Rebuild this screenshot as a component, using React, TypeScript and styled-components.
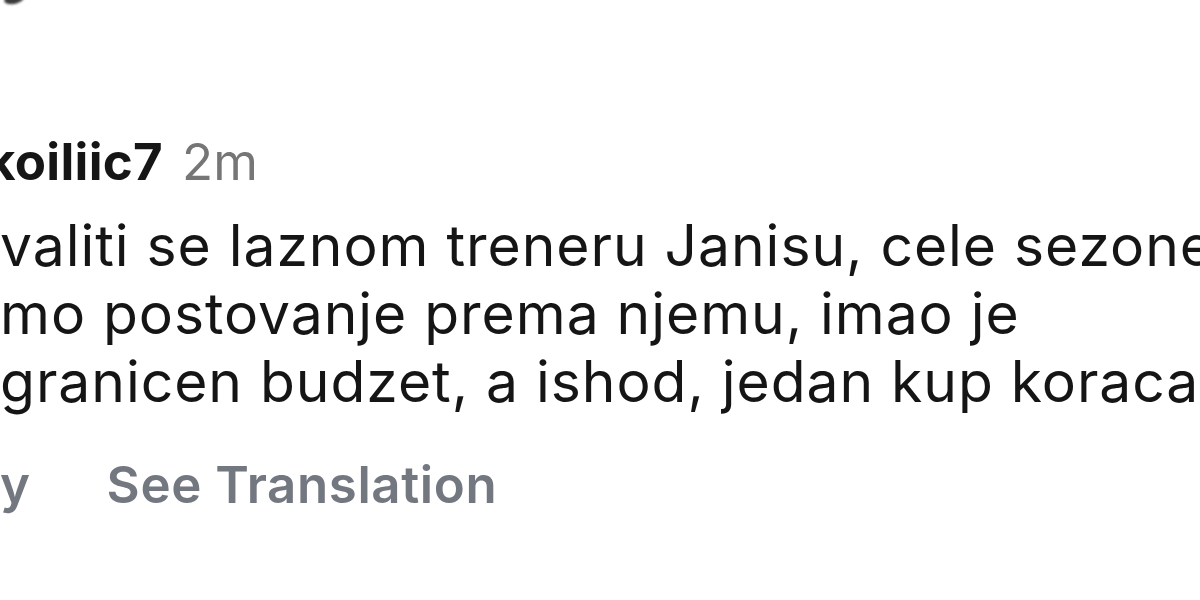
import React from "react";
import styled, { createGlobalStyle } from "styled-components";

const Global = createGlobalStyle`
  html, body {
    margin: 0;
    padding: 0;
    background: #ffffff;
    overflow: hidden;
  }
  body {
    font-family: "Inter", "Liberation Sans", sans-serif;
    -webkit-font-smoothing: antialiased;
  }
`;

const Page = styled.div`
  width: 1200px;
  height: 600px;
  overflow: hidden;
  background: #ffffff;
  position: relative;
`;

const TopSpeck = styled.div`
  position: absolute;
  left: 4px;
  top: -6px;
  width: 20px;
  height: 10px;
  border-radius: 50%;
  background: #3a3a3a;
  filter: blur(1px);
  transform: rotate(-12deg);
`;

const Comment = styled.div`
  display: flex;
  flex-direction: column;
  padding-top: 132px;
`;

const Header = styled.div`
  display: flex;
  align-items: baseline;
  gap: 19px;
  font-size: 51px;
  line-height: 60px;
  margin-left: -14px;
`;

const Username = styled.span`
  font-weight: 700;
  color: #161616;
  letter-spacing: 0.3px;
`;

const Time = styled.span`
  font-weight: 400;
  color: #767676;
`;

const Body = styled.div`
  margin-top: 20px;
  display: flex;
  flex-direction: column;
  font-size: 57px;
  line-height: 68px;
  letter-spacing: 0.95px;
  color: #151515;
  white-space: nowrap;
`;

const Line = styled.span`
  display: block;
`;

const Actions = styled.div`
  margin-top: 39px;
  display: flex;
  align-items: baseline;
  gap: 76px;
  font-size: 51px;
  line-height: 60px;
  font-weight: 600;
  letter-spacing: 0.6px;
  color: #737780;
`;

const Action = styled.span``;

export default function App() {
  return (
    <Page>
      <Global />
      <TopSpeck />
      <Comment>
        <Header>
          <Username>koiliic7</Username>
          <Time>2m</Time>
        </Header>
        <Body>
          <Line>valiti se laznom treneru Janisu, cele sezone</Line>
          <Line>mo postovanje prema njemu, imao je</Line>
          <Line>granicen budzet, a ishod, jedan kup koraca</Line>
        </Body>
        <Actions>
          <Action>y</Action>
          <Action>See Translation</Action>
        </Actions>
      </Comment>
    </Page>
  );
}
